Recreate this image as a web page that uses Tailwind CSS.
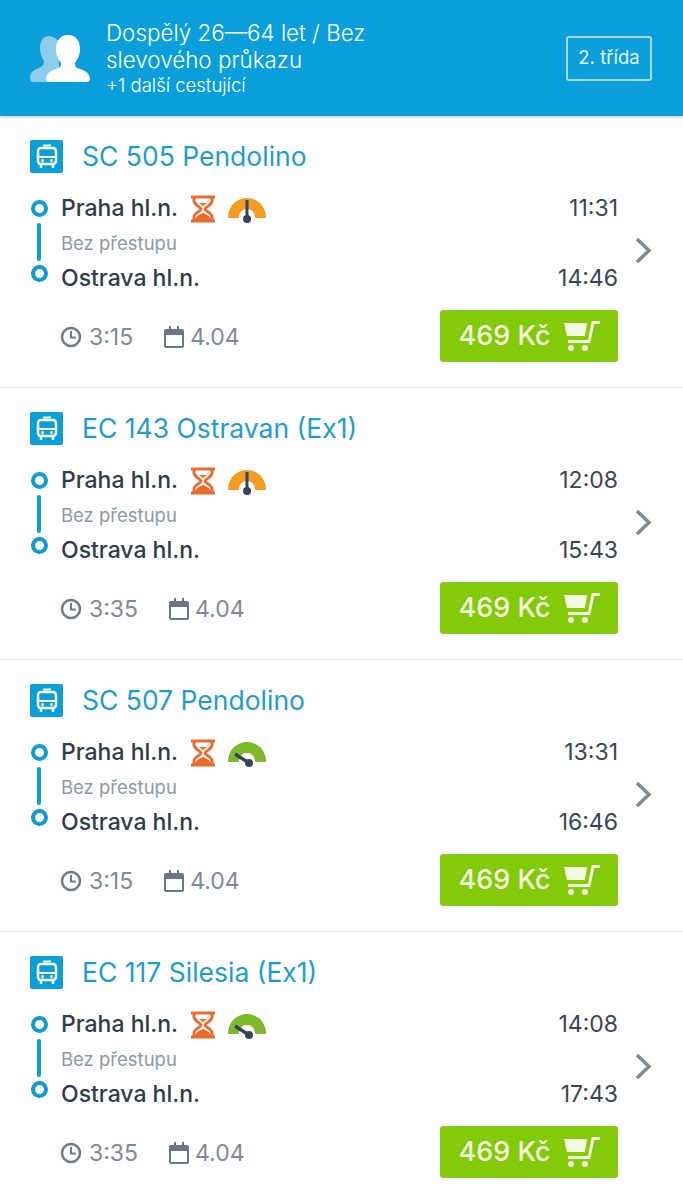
<!DOCTYPE html>
<html lang="cs">
<head>
  <meta charset="UTF-8" />
  <meta name="viewport" content="width=device-width, initial-scale=1.0" />
  <title>Spojení Praha - Ostrava</title>
  <script src="https://cdn.jsdelivr.net/npm/@tailwindcss/browser@4"></script>
</head>
<body class="bg-white font-['Inter',sans-serif] overflow-hidden">
  <header class="relative z-10 flex items-center h-[116px] pl-[30px] pr-[31px] bg-[#0a9fda] shadow-[0_1px_3px_rgba(0,0,0,0.25)]">
    <svg class="w-[60px] h-[47px] shrink-0 mt-[1px]" viewBox="0 0 60 47">
      <path fill="#8ecdeb" d="M19 1c-6 0-9 5-9 12 0 5 2 10 4 13 0 3-1 5-5 7-5 2-9 4-9 10 0 2 1 4 3 4h26V7c-3-4-6-6-10-6z" />
      <path fill="#ffffff" d="M38 0c-8 0-12 6-12 14 0 7 3 11 5 14 0 3-1 5-5 6-6 2-9 4-10 9 0 2 1 4 3 4h38c2 0 3-2 3-4-1-5-4-7-10-9-4-1-5-3-5-6 2-3 5-7 5-14 0-8-4-14-12-14z" />
    </svg>
    <div class="ml-[16px] w-[290px] text-white">
      <p class="text-[22.400px] leading-[27px] font-light">Dospělý 26—64 let / Bez slevového průkazu</p>
      <p class="text-[18.500px] leading-[24px] font-light">+1 další cestující</p>
    </div>
    <div class="ml-auto flex items-center justify-center w-[86px] h-[45px] border-2 border-[#a5dcf3] rounded-[3px] text-[18.500px] text-[#e6f6fc]">2. třída</div>
  </header>

  <main id="connections"></main>

  <script>
    const connections = [
      { name: "SC 505 Pendolino", from: "11:31", to: "14:46", length: "3:15", load: "orange" },
      { name: "EC 143 Ostravan (Ex1)", from: "12:08", to: "15:43", length: "3:35", load: "orange" },
      { name: "SC 507 Pendolino", from: "13:31", to: "16:46", length: "3:15", load: "green" },
      { name: "EC 117 Silesia (Ex1)", from: "14:08", to: "17:43", length: "3:35", load: "green" },
    ];

    const hourglass = `
      <svg class="w-[26px] h-[28px] ml-[12px]" viewBox="0 0 26 28" fill="none">
        <path stroke="#ee6a2c" stroke-width="3" d="M1 2h24M1 26h24M4 2v4c0 4 7 6 7 8s-7 4-7 8v4M22 2v4c0 4-7 6-7 8s7 4 7 8v4" />
        <path fill="#ee6a2c" d="M13 18c-3 1-7 3-8 7h16c-1-4-5-6-8-7zM9 8h8l-4 3z" />
      </svg>`;

    // the needle points up while the train is filling, down-left once there is room
    const gauge = (load) => `
      <svg class="w-[40px] h-[28px] ml-[11px]" viewBox="0 0 40 28" fill="none">
        <path fill="${load === "orange" ? "#f39c1f" : "#7fb92c"}" d="M1 22a19 19 0 0 1 38 0c0 1-1 1-2 1h-7c-1 0-2 0-2-1a8 8 0 0 0-16 0c0 1-1 1-2 1H3c-1 0-2 0-2-1z" />
        ${load === "orange"
          ? '<path stroke="#34445c" stroke-width="3" d="M20 5v19" /><circle cx="20" cy="24" r="4" fill="#34445c" />'
          : '<path stroke="#34445c" stroke-width="3.500" d="M8 15l14 9" /><circle cx="22" cy="24" r="4" fill="#34445c" />'}
      </svg>`;

    const cart = `
      <svg class="w-[36px] h-[31px] ml-[13px]" viewBox="0 0 36 31" fill="none">
        <path fill="#f2fadf" d="M0 2h23l-2 13H3z" />
        <path stroke="#f2fadf" stroke-width="3" d="M36 1.500h-7l-4 19H4" />
        <circle cx="7" cy="27" r="3" fill="#f2fadf" />
        <circle cx="21" cy="27" r="3" fill="#f2fadf" />
      </svg>`;

    document.getElementById("connections").innerHTML = connections.map((c) => `
      <article class="relative h-[272px] pl-[30px] pr-[65px] pt-[23px] border-b border-[#e3e4e6]">
        <div class="flex items-center h-[34px]">
          <span class="flex items-center justify-center w-[33px] h-[33px] bg-[#0a9fda] rounded-[2px]">
            <svg class="w-[22px] h-[24px]" viewBox="0 0 22 24" fill="none">
              <path stroke="#ffffff" stroke-width="2" d="M7 1.500h8" />
              <rect x="2" y="4" width="18" height="16" rx="3" stroke="#ffffff" stroke-width="2.500" />
              <path stroke="#ffffff" stroke-width="2" d="M3 13h16" />
              <circle cx="6.500" cy="16.500" r="1.500" fill="#ffffff" />
              <circle cx="15.500" cy="16.500" r="1.500" fill="#ffffff" />
              <path stroke="#ffffff" stroke-width="2.500" d="M5 21v3M17 21v3" />
            </svg>
          </span>
          <h2 class="ml-[19px] pt-[2px] text-[26.500px] text-[#1f9ccf]">${c.name}</h2>
        </div>

        <div class="flex mt-[18px] h-[105px]">
          <div class="flex flex-col items-center w-[18px] pt-[9px]">
            <span class="w-[17px] h-[17px] rounded-full border-[4px] border-[#0f9ad3]"></span>
            <span class="w-[4px] h-[38px] mt-[6px] bg-[#0f9ad3] rounded-full"></span>
            <span class="w-[17px] h-[17px] mt-[4px] rounded-full border-[4px] border-[#0f9ad3]"></span>
          </div>
          <div class="flex-1 ml-[13px]">
            <div class="flex items-center h-[35px]">
              <span class="text-[23px] font-medium text-[#2f3a4a]">Praha hl.n.</span>
              ${hourglass}
              ${gauge(c.load)}
              <span class="ml-auto text-[23px] text-[#3b4554]">${c.from}</span>
            </div>
            <p class="h-[35px] leading-[35px] text-[18.500px] text-[#8f98a6]">Bez přestupu</p>
            <div class="flex items-center h-[35px]">
              <span class="text-[23px] font-medium text-[#2f3a4a]">Ostrava hl.n.</span>
              <span class="ml-auto text-[23px] text-[#3b4554]">${c.to}</span>
            </div>
          </div>
        </div>

        <div class="flex items-center mt-[14px] pl-[30px]">
          <svg class="w-[22px] h-[22px] mt-[1px]" viewBox="0 0 22 22" fill="none" stroke="#6f7a8a">
            <circle cx="11" cy="11" r="9" stroke-width="2.500" />
            <path stroke-width="2" d="M11 5v6.500h5" />
          </svg>
          <span class="ml-[7px] pt-[2px] text-[23px] text-[#7f8998]">${c.length}</span>
          <svg class="w-[20px] h-[22px] ml-[31px] mt-[1px]" viewBox="0 0 20 22" fill="none">
            <path fill="#6a7588" d="M2 3h3V0h2v3h6V0h2v3h3a2 2 0 0 1 2 2v15a2 2 0 0 1-2 2H2a2 2 0 0 1-2-2V5a2 2 0 0 1 2-2zm0 6v11h16V9z" />
          </svg>
          <span class="ml-[6px] pt-[2px] text-[23px] text-[#7f8998]">4.04</span>
          <button class="flex items-center justify-center ml-auto w-[178px] h-[52px] bg-[#84c90a] rounded-[3px] text-[27px] font-medium text-[#f2fadf]">469 Kč${cart}</button>
        </div>

        <svg class="absolute left-[635px] top-[121px] w-[17px] h-[27px]" viewBox="0 0 17 27" fill="none">
          <path stroke="#7e8a9a" stroke-width="3.500" d="M2 2l12 11.500L2 25" />
        </svg>
      </article>`).join("");
  </script>
</body>
</html>
